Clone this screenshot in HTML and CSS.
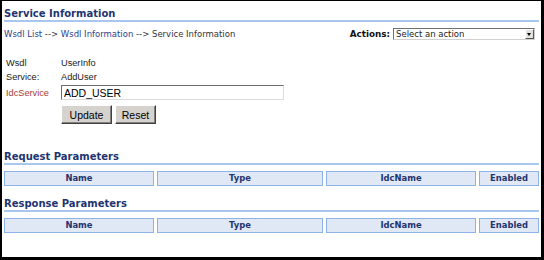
FILE: index.html
```html
<!DOCTYPE html>
<html lang="en">
<head>
    <meta charset="UTF-8" />
    <title>Service Information</title>
    <link rel="stylesheet" href="styles.css">
</head>
<body>

    <div class="frame">
        <h2 class="section-title">Service Information</h2>

        <div class="crumb-bar">
            <div class="crumbs">
                <a href="#">Wsdl List</a> --&gt; <a href="#">Wsdl Information</a> --&gt; Service Information
            </div>
            <div class="actions">
                <label for="actionSelect">Actions:</label>
                <div class="select-wrap">
                    <select id="actionSelect">
                        <option>Select an action</option>
                    </select>
                    <span class="select-arrow"></span>
                </div>
            </div>
        </div>

        <div class="info">
            <span class="label">Wsdl</span>
            <span class="value">UserInfo</span>

            <span class="label">Service:</span>
            <span class="value">AddUser</span>

            <span class="label required">IdcService</span>
            <span class="value"><input type="text" class="text-field" value="ADD_USER"></span>

            <span></span>
            <span class="value buttons">
                <button class="btn btn-update">Update</button>
                <button class="btn btn-reset">Reset</button>
            </span>
        </div>

        <h2 class="section-title params-title">Request Parameters</h2>
        <div class="param-head">
            <div>Name</div>
            <div>Type</div>
            <div>IdcName</div>
            <div>Enabled</div>
        </div>

        <h2 class="section-title params-title response">Response Parameters</h2>
        <div class="param-head">
            <div>Name</div>
            <div>Type</div>
            <div>IdcName</div>
            <div>Enabled</div>
        </div>
    </div>

</body>
</html>
```

FILE: styles.css
```css
body {
    margin: 0;
    background-color: #fff;
}

.frame {
    box-sizing: border-box;
    width: 544px;
    height: 260px;
    border: 1px solid #000;
    border-left-width: 2px;
    border-right-width: 3px;
    border-bottom-width: 3px;
    padding: 7px 2px 0 2px;
    font-family: "DejaVu Sans", Verdana, sans-serif;
    color: #333;
}

.section-title {
    margin: 0;
    font-size: 10px;
    line-height: 12px;
    font-weight: bold;
    color: #1f3470;
    border-bottom: 2px solid #a8c6ee; /* light blue rule */
}

/* breadcrumb + actions */
.crumb-bar {
    display: flex;
    justify-content: space-between;
    align-items: center;
    margin-top: 6px;
    height: 12px;
    font-size: 8.5px;
}

.crumbs a {
    color: #2b3f8c;
    text-decoration: none;
}

.actions {
    display: flex;
    align-items: center;
    gap: 3px;
    margin-right: 4px;
}

.actions label {
    font-weight: bold;
    font-size: 8.8px;
    color: #111;
}

.select-wrap {
    position: relative;
}

.select-wrap select {
    appearance: none;
    box-sizing: border-box;
    width: 142px;
    height: 12px;
    margin: 0;
    padding: 0 0 0 2px;
    border: 1px solid;
    border-color: #707070 #d0d0d0 #d0d0d0 #707070;
    background-color: #fff;
    font-family: "DejaVu Sans", Verdana, sans-serif;
    font-size: 8.5px;
    line-height: 10px;
    color: #222;
}

.select-arrow {
    position: absolute;
    top: 1px;
    right: 1px;
    width: 9px;
    height: 10px;
    box-sizing: border-box;
    background-color: #e4e2dc;
    border: 1px solid;
    border-color: #fff #555 #555 #fff;
}

.select-arrow::after {
    content: "";
    position: absolute;
    left: 1px;
    top: 3px;
    border-left: 2.5px solid transparent;
    border-right: 2.5px solid transparent;
    border-top: 3px solid #000;
}

/* service info grid */
.info {
    display: grid;
    grid-template-columns: 57px 1fr;
    margin-top: 16px;
    font-family: "Liberation Sans", Arial, sans-serif;
    font-size: 9.2px;
    line-height: 14px;
    color: #1a1a1a;
}

.label {
    padding-left: 2px;
}

.label.required {
    color: #a83a36;
    padding-top: 2px;
}

.text-field {
    display: block;
    box-sizing: border-box;
    width: 223px;
    height: 15px;
    margin: 1px 0 0 0;
    padding: 1px 2px 0 2px;
    border: 1px solid;
    border-color: #6e6e6e #dcdcdc #dcdcdc #6e6e6e;
    font-family: "Liberation Sans", Arial, sans-serif;
    font-size: 10.5px;
    line-height: 13px;
    color: #000;
}

.buttons {
    display: flex;
    gap: 3px;
    margin-top: 5px;
}

.btn {
    box-sizing: border-box;
    height: 19px;
    padding: 0;
    border: 1px solid;
    border-color: #fff #404040 #404040 #fff;
    box-shadow: inset -1px -1px 0 #808080;
    background-color: #d6d3ce;
    font-family: "Liberation Sans", Arial, sans-serif;
    font-size: 10.5px;
    color: #000;
}

.btn-update {
    width: 51px;
}

.btn-reset {
    width: 41px;
}

/* parameter tables */
.params-title {
    margin-top: 27px;
}

.params-title.response {
    margin-top: 12px;
}

.param-head {
    display: grid;
    grid-template-columns: 150px 166px 150px 60px;
    column-gap: 3px;
    margin-top: 6px;
}

.param-head div {
    box-sizing: border-box;
    height: 15px;
    border: 1px solid #8db3e6;
    background-color: #dfe8f4;
    text-align: center;
    font-size: 8.4px;
    font-weight: bold;
    line-height: 13px;
    color: #1f3470;
}
```
